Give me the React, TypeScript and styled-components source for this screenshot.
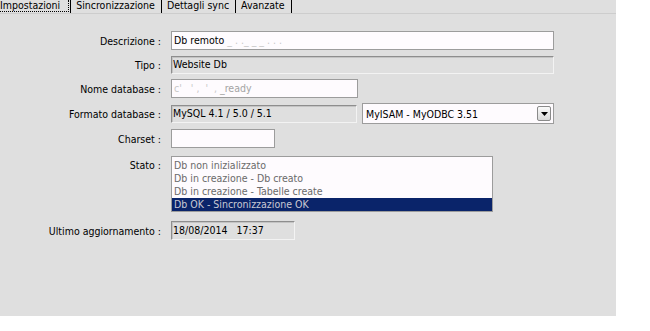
import React from "react";
import styled, { createGlobalStyle } from "styled-components";

const Global = createGlobalStyle`
  html, body { margin: 0; padding: 0; background: #ffffff; }
  * { box-sizing: border-box; }
`;

const Panel = styled.div`
  width: 616px;
  height: 316px;
  background: #dfdfdf;
  font-family: "DejaVu Sans Condensed", "Liberation Sans", Arial, sans-serif;
  font-stretch: condensed;
  font-size: 10.5px;
  color: #000;
  overflow: hidden;
`;

const TabBar = styled.div`
  display: flex;
  height: 14px;
  border-bottom: 1px solid #cdcdcd;
`;

const Tab = styled.div<{ $first?: boolean }>`
  height: 13px;
  line-height: 11px;
  padding: 0 ${(p) => (p.$first ? "1px" : "6px")} 0 ${(p) => (p.$first ? "0" : "5px")};
  border-right: 1px solid #000;
  white-space: nowrap;
`;

const Focus = styled.span`
  display: inline-block;
  height: 12px;
  padding: 0 8px 0 0;
  border: 1px dotted #000;
  border-left: none;
  border-top: none;
  line-height: 11px;
`;

const Form = styled.div`
  display: flex;
  flex-direction: column;
  padding-top: 17px;
`;

const Row = styled.div<{ $gap: number; $top?: boolean }>`
  display: flex;
  align-items: ${(p) => (p.$top ? "flex-start" : "center")};
  margin-top: ${(p) => p.$gap}px;
`;

const Label = styled.div<{ $top?: boolean }>`
  width: 161px;
  text-align: right;
  margin-right: 10px;
  white-space: pre;
  padding-top: ${(p) => (p.$top ? "3px" : "0")};
`;

const TextBox = styled.div<{ $w: number; $h?: number; $muted?: boolean }>`
  width: ${(p) => p.$w}px;
  height: ${(p) => p.$h ?? 19}px;
  background: #fefbfe;
  border: 1px solid #9c9c9c;
  padding: 0 2px;
  line-height: ${(p) => (p.$h ?? 19) - 3}px;
  color: ${(p) => (p.$muted ? "#a4a4a4" : "#000")};
  white-space: pre;
  overflow: hidden;
`;

const Faint = styled.span`
  color: #c8c8c8;
`;

const ReadBox = styled.div<{ $w: number; $h?: number }>`
  width: ${(p) => p.$w}px;
  height: ${(p) => p.$h ?? 18}px;
  background: #dfdfdf;
  border-top: 1px solid #8e8e8e;
  border-left: 1px solid #8e8e8e;
  border-right: 1px solid #f3f3f3;
  border-bottom: 1px solid #f3f3f3;
  box-shadow: inset 1px 1px 0 #c4c4c4;
  padding: 0 1px;
  line-height: ${(p) => (p.$h ?? 18) - 3}px;
  white-space: pre;
`;

const Select = styled.div`
  display: flex;
  align-items: center;
  justify-content: space-between;
  width: 192px;
  height: 21px;
  margin-left: 5px;
  background: #fefbfe;
  border: 1px solid #9c9c9c;
  padding: 0 2px 0 3px;
`;

const DropButton = styled.div`
  width: 14px;
  height: 15px;
  border: 1px solid #8a8a8a;
  border-radius: 2px;
  background: linear-gradient(#fafafa, #d8d8d8);
  display: flex;
  align-items: center;
  justify-content: center;
`;

const ListBox = styled.div`
  width: 322px;
  height: 56px;
  background: #fefbfe;
  border: 1px solid #9c9c9c;
  padding: 2px 0 0 0;
  display: flex;
  flex-direction: column;
`;

const Item = styled.div<{ $sel?: boolean }>`
  height: 13px;
  line-height: 13px;
  padding-left: 2px;
  color: ${(p) => (p.$sel ? "#c9c9d4" : "#6a6a6a")};
  background: ${(p) => (p.$sel ? "#0a246a" : "transparent")};
`;

const items = [
  "Db non inizializzato",
  "Db in creazione - Db creato",
  "Db in creazione - Tabelle create",
  "Db OK - Sincronizzazione OK",
];

export default function App() {
  return (
    <>
      <Global />
      <Panel>
        <TabBar>
          <Tab $first>
            <Focus>Impostazioni</Focus>
          </Tab>
          <Tab>Sincronizzazione</Tab>
          <Tab>Dettagli sync</Tab>
          <Tab>Avanzate</Tab>
        </TabBar>
        <Form>
          <Row $gap={0}>
            <Label>Descrizione :</Label>
            <TextBox $w={383}>
              Db remoto <Faint>_ . ._ _ _ . . .</Faint>
            </TextBox>
          </Row>
          <Row $gap={6}>
            <Label>Tipo :</Label>
            <ReadBox $w={383}>Website Db</ReadBox>
          </Row>
          <Row $gap={5}>
            <Label>Nome database :</Label>
            <TextBox $w={187} $muted>
              <Faint>c'   ' ,  '  , </Faint>_ready
            </TextBox>
          </Row>
          <Row $gap={5}>
            <Label>Formato database :</Label>
            <ReadBox $w={186}>MySQL 4.1 / 5.0 / 5.1</ReadBox>
            <Select>
              <span>MyISAM - MyODBC 3.51</span>
              <DropButton>
                <svg width="7" height="4" viewBox="0 0 7 4">
                  <path d="M0 0 H7 L3.5 4 Z" fill="#000" />
                </svg>
              </DropButton>
            </Select>
          </Row>
          <Row $gap={5}>
            <Label>Charset :</Label>
            <TextBox $w={104} />
          </Row>
          <Row $gap={8} $top>
            <Label $top>Stato :</Label>
            <ListBox>
              {items.map((t, i) => (
                <Item key={t} $sel={i === 3}>
                  {t}
                </Item>
              ))}
            </ListBox>
          </Row>
          <Row $gap={9}>
            <Label>Ultimo aggiornamento :</Label>
            <ReadBox $w={124} $h={19}>18/08/2014   17:37</ReadBox>
          </Row>
        </Form>
      </Panel>
    </>
  );
}
